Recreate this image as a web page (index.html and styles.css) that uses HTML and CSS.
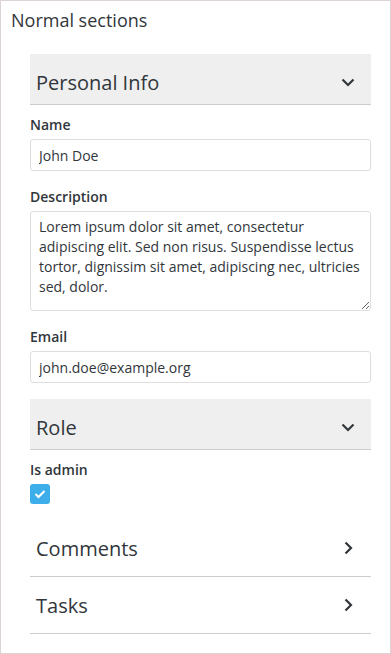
FILE: index.html
```html
<!DOCTYPE html>
<html lang="en">
<head>
  <meta charset="UTF-8" />
  <meta name="viewport" content="width=device-width, initial-scale=1.0" />
  <title>Normal sections</title>
  <link rel="stylesheet" href="styles.css">
</head>
<body>
  <div class="page">
    <h2 class="page-title">Normal sections</h2>

    <div class="sections">
      <section class="section open">
        <div class="section-head">
          <span class="section-title">Personal Info</span>
          <svg class="chevron" width="14" height="14" viewBox="0 0 14 14"><path d="M1.5 4.5 L7 10 L12.5 4.5" /></svg>
        </div>
        <div class="section-body">
          <div class="field">
            <label class="label" for="name">Name</label>
            <input class="input" id="name" type="text" value="John Doe" />
          </div>
          <div class="field">
            <label class="label" for="desc">Description</label>
            <textarea class="input textarea" id="desc">Lorem ipsum dolor sit amet, consectetur adipiscing elit. Sed non risus. Suspendisse lectus tortor, dignissim sit amet, adipiscing nec, ultricies sed, dolor.</textarea>
          </div>
          <div class="field">
            <label class="label" for="email">Email</label>
            <input class="input" id="email" type="text" value="john.doe@example.org" />
          </div>
        </div>
      </section>

      <section class="section open">
        <div class="section-head">
          <span class="section-title">Role</span>
          <svg class="chevron" width="14" height="14" viewBox="0 0 14 14"><path d="M1.5 4.5 L7 10 L12.5 4.5" /></svg>
        </div>
        <div class="section-body">
          <div class="field">
            <span class="label">Is admin</span>
            <label class="check">
              <input type="checkbox" checked hidden />
              <span class="check-box">
                <svg width="20" height="20" viewBox="0 0 20 20"><path d="M5.5 10 L8.5 13 L14.5 7" /></svg>
              </span>
            </label>
          </div>
        </div>
      </section>

      <section class="section closed">
        <div class="section-head">
          <span class="section-title">Comments</span>
          <svg class="chevron" width="14" height="14" viewBox="0 0 14 14"><path d="M4.5 1.5 L10 7 L4.5 12.5" /></svg>
        </div>
      </section>

      <section class="section closed">
        <div class="section-head">
          <span class="section-title">Tasks</span>
          <svg class="chevron" width="14" height="14" viewBox="0 0 14 14"><path d="M4.5 1.5 L10 7 L4.5 12.5" /></svg>
        </div>
      </section>
    </div>
  </div>
</body>
</html>
```

FILE: styles.css
```css
body {
  margin: 0;
  background-color: #fff;
  color: #31363b;
  font-family: 'Open Sans', 'Liberation Sans', sans-serif;
}

.page {
  min-height: 100vh;
  box-sizing: border-box;
  border: 1px solid #dcd3d3;
  padding: 7px 0 0 0;
}

.page-title {
  margin: 0 0 22px 10px;
  font-size: 18px;
  font-weight: 400;
  line-height: 24px;
}

.sections {
  padding: 0 19px 0 29px;
}

.section-head {
  display: flex;
  align-items: flex-start;
  justify-content: space-between;
  box-sizing: border-box;
  height: 51px;
  padding: 15px 16px 0 6px;
  border-bottom: 1px solid #cccccc;
}

.open .section-head {
  background-color: #efefef;
}

.closed .section-head {
  height: 57px;
}

.section-title {
  font-size: 20px;
  line-height: 27px;
}

.chevron {
  margin-top: 6px;
  fill: none;
  stroke: #31363b;
  stroke-width: 2.2;
}

.section-body {
  padding-top: 10px;
}

.field {
  margin-bottom: 16px;
}

.label {
  display: block;
  margin-bottom: 5px;
  font-size: 14px;
  font-weight: 600;
  line-height: 19px;
}

.input {
  display: block;
  width: 100%;
  height: 32px;
  box-sizing: border-box;
  margin: 0;
  padding: 5px 8px;
  border: 1px solid #dedede;
  border-radius: 3px;
  font-family: inherit;
  font-size: 14px;
  line-height: 20px;
  color: #31363b;
  outline: none;
}

.textarea {
  height: 100px;
  padding-right: 5px;
  resize: vertical;
}

.check {
  display: block;
  width: 20px;
}

.check-box {
  display: block;
  width: 20px;
  height: 20px;
  border-radius: 3px;
  background-color: #3daee9;
}

.check-box svg {
  display: block;
  fill: none;
  stroke: #fff;
  stroke-width: 2;
}
```
